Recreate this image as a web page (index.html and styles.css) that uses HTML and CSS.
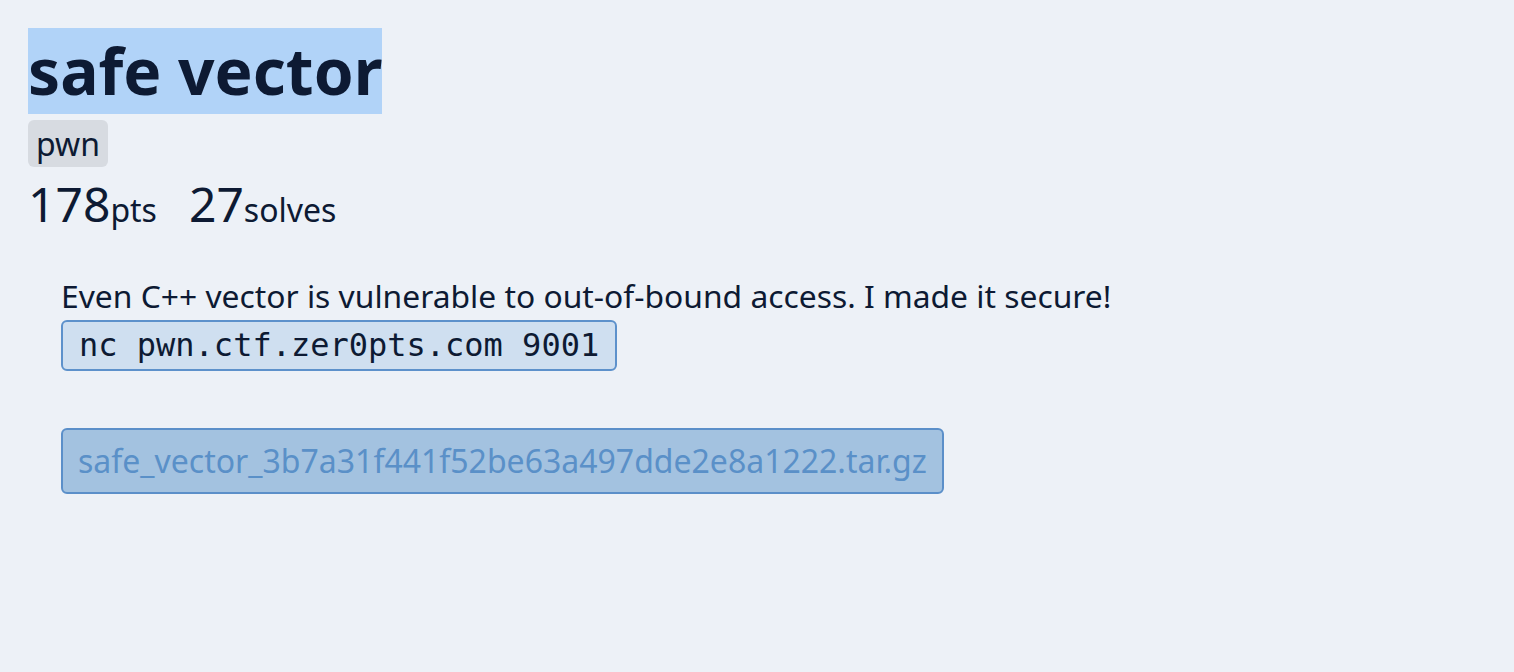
FILE: index.html
```html
<!DOCTYPE html>
<html>
<head>
<meta charset="utf-8">
<link rel="stylesheet" href="styles.css">
</head>
<body>
<div class="page">
  <h1 class="title"><span class="sel">safe vector</span></h1>
  <div class="tags"><span class="tag">pwn</span></div>
  <div class="stats">
    <span class="stat"><span class="num">178</span><span class="unit">pts</span></span>
    <span class="stat"><span class="num">27</span><span class="unit">solves</span></span>
  </div>
  <div class="body">
    <p class="desc">Even C++ vector is vulnerable to out-of-bound access. I made it secure!</p>
    <code class="cmd">nc pwn.ctf.zer0pts.com 9001</code>
    <div class="files">
      <a class="file" href="#">safe_vector_3b7a31f441f52be63a497dde2e8a1222.tar.gz</a>
    </div>
  </div>
</div>
</body>
</html>
```
FILE: styles.css
```css
html, body {
  margin: 0;
  padding: 0;
  background: #edf1f7;
}
body {
  font-family: "Noto Sans", "Open Sans", sans-serif;
  color: #0d1a33;
}
.page {
  padding: 28px;
}
.title {
  margin: 0;
  font-size: 64px;
  font-weight: 700;
  line-height: 86px;
}
.sel {
  background: #b1d3f8;
  display: inline-block;
}
.tags {
  margin-top: 6px;
}
.tag {
  display: inline-block;
  background: #d7dbe1;
  border-radius: 6px;
  font-size: 32px;
  line-height: 47px;
  padding: 0 8px;
}
.stats {
  display: flex;
  gap: 32px;
  align-items: baseline;
  margin-top: 4px;
}
.num {
  font-size: 48px;
}
.unit {
  font-size: 32px;
}
.body {
  padding-left: 33px;
  margin-top: 40px;
}
.desc {
  margin: 0 0 4px;
  font-size: 31.8px;
  line-height: 40px;
}
.cmd {
  display: inline-block;
  font-family: "DejaVu Sans Mono", monospace;
  font-size: 32px;
  background: #cfdff0;
  border: 2px solid #5d91cb;
  border-radius: 6px;
  padding: 2px 16px;
  line-height: 43px;
}
.files {
  margin-top: 57px;
}
.file {
  display: inline-block;
  background: #a3c2e0;
  border: 2px solid #5b8fc9;
  border-radius: 6px;
  color: #5a90c8;
  text-decoration: none;
  font-size: 32px;
  line-height: 62px;
  padding: 0 15px;
}
```
